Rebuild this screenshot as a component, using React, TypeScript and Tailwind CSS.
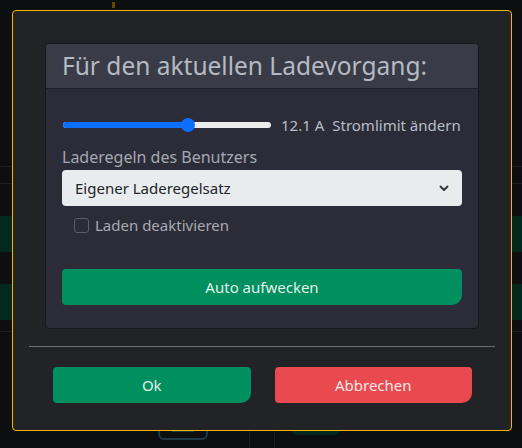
import React from 'react'

function Slider({ value, min, max }: { value: number; min: number; max: number }) {
  const pct = ((value - min) / (max - min)) * 100
  return (
    <div className="relative h-[14px] w-[208px] shrink-0">
      <div className="absolute inset-x-0 top-[4px] h-[6px] rounded-full bg-[#ececec]" />
      <div className="absolute left-0 top-[4px] h-[6px] rounded-full bg-[#0d6efd]" style={{ width: `${pct}%` }} />
      <div
        className="absolute top-0 h-[14px] w-[14px] rounded-full bg-[#0d6efd]"
        style={{ left: `calc(${pct}% - ${(pct / 100) * 14}px)` }}
      />
    </div>
  )
}

function Backdrop() {
  return (
    <div className="flex h-[448px] flex-col bg-[#0d0e10]">
      <div className="h-[167px]">
        <div className="ml-[112px] mt-[2px] h-[6px] w-[3px] bg-[#5e4a05]" />
      </div>
      <div className="h-px bg-[#1d1e22]" />
      <div className="h-[17px]" />
      <div className="h-px bg-[#1d1e22]" />
      <div className="h-[32px]" />
      <div className="h-[36px] bg-[#03291d]" />
      <div className="h-[33px]" />
      <div className="h-[36px] bg-[#03291d]" />
      <div className="h-[11px]" />
      <div className="h-px bg-[#1d1e22]" />
      <div className="flex flex-1 items-start pt-[76px]">
        <div className="ml-[158px] flex h-[32px] w-[50px] items-end justify-center rounded-[6px] border-2 border-[#1b3a45] pb-[6px]">
          <div className="h-[6px] w-[22px] border border-[#1b3a45]" />
        </div>
        <div className="ml-[41px] mt-[20px] h-[20px] w-px bg-[#1d1e22]" />
        <div className="ml-[24px] mt-[20px] h-[20px] w-px bg-[#1d1e22]" />
        <div className="ml-[16px] h-[27px] w-[49px] rounded-[6px] bg-[#02291b]" />
      </div>
    </div>
  )
}

export default function App() {
  return (
    <div className="relative h-[448px] w-[522px] overflow-hidden" style={{ fontFamily: '"Noto Sans", "Open Sans", sans-serif' }}>
      <Backdrop />
      <div className="absolute inset-0 pl-[12px] pt-[10px]">
        <div className="flex h-[421px] w-[500px] flex-col rounded-[4px] border border-[#f2b705] bg-[#212327]">
          <div className="px-[32px] pt-[32px]">
            <div className="overflow-hidden rounded-[4px] border border-[#18191e] bg-[#2c2c38]">
              <div className="flex h-[45px] items-center border-b border-[#1f2027] bg-[#393c47] px-4">
                <h4 className="whitespace-nowrap text-[24.5px] leading-[30px] text-[#b5bac2]">Für den aktuellen Ladevorgang:</h4>
              </div>
              <div className="px-4 pb-[23px] pt-[24px]">
                <div className="flex h-[24px] items-center whitespace-nowrap text-[15px] text-[#b9bdc4]">
                  <div className="ml-px shrink-0">
                    <Slider value={12.1} min={6} max={16} />
                  </div>
                  <span className="ml-[10px]">12.1 A</span>
                  <span className="ml-[8px]">Stromlimit ändern</span>
                </div>
                <div className="mt-[8px] text-[16px] leading-[24px] text-[#a4a8b0]">Laderegeln des Benutzers</div>
                <div className="mt-px flex h-[36px] items-center justify-between rounded-[4px] bg-[#e9ecef] pl-[13px] pr-[10px] text-[15px] text-[#212529]">
                  <span>Eigener Laderegelsatz</span>
                  <svg width="16" height="16" viewBox="0 0 16 16" fill="none" stroke="#343a40" strokeWidth="2" strokeLinecap="round" strokeLinejoin="round">
                    <path d="M4.5 6.5l3.5 3.5 3.5-3.5" />
                  </svg>
                </div>
                <label className="mt-[7px] flex h-[24px] items-center pl-[12px] text-[15px] text-[#a6aab1]">
                  <span className="h-[15px] w-[15px] rounded-[3px] border border-[#5a5d65]" />
                  <span className="ml-[6px]">Laden deaktivieren</span>
                </label>
                <button className="mt-[32px] flex h-[36px] w-full items-center justify-center rounded-[4px] rounded-br-[10px] bg-[#008f5f] text-[15px] text-[#e6efe9]">
                  Auto aufwecken
                </button>
              </div>
            </div>
          </div>
          <div className="mx-4 mt-[17px] h-px bg-[#6c6e73]" />
          <div className="mt-[20px] grid grid-cols-2 gap-[24px] pl-[40px] pr-[39px]">
            <button className="flex h-[36px] items-center justify-center rounded-[4px] rounded-br-[10px] bg-[#008f5f] text-[15px] text-[#e6efe9]">
              Ok
            </button>
            <button className="flex h-[36px] items-center justify-center rounded-[4px] rounded-br-[10px] bg-[#e84a4f] text-[15px] text-[#f7e6e6]">
              Abbrechen
            </button>
          </div>
        </div>
      </div>
    </div>
  )
}
